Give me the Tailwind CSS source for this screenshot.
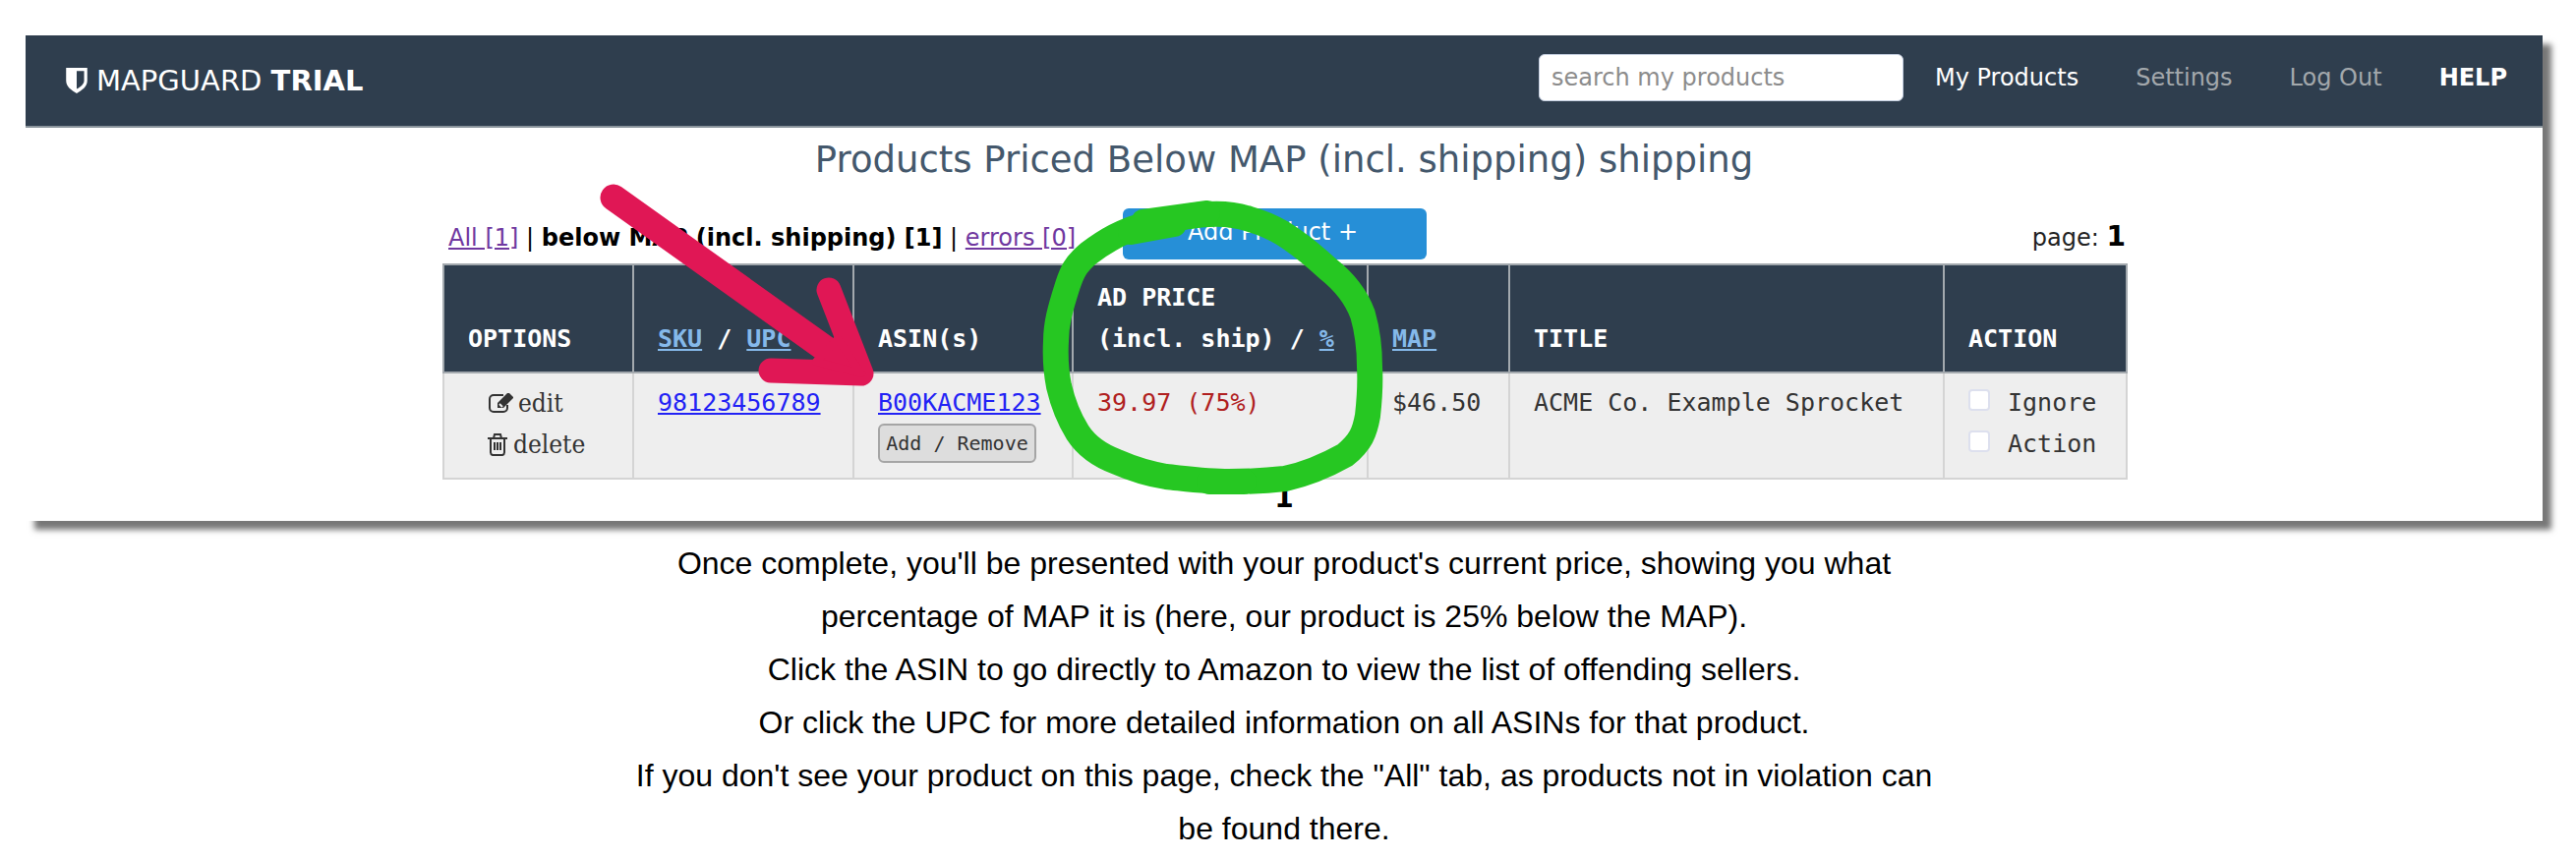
<!DOCTYPE html>
<html lang="en">
<head>
    <meta charset="UTF-8">
    <meta name="viewport" content="width=device-width, initial-scale=1.0">
    <title>MapGuard Trial</title>
    <script src="https://cdn.jsdelivr.net/npm/@tailwindcss/browser@4"></script>
</head>
<body class="bg-white text-black">
    <div class="pl-[26px] pt-9 pr-[34px]">
        <div class="relative bg-white shadow-[9px_9px_6px_#777] font-['DejaVu_Sans',sans-serif] text-2xl pb-1">
            <header class="flex items-center justify-between h-[94px] pl-10 pr-9 bg-[#2f3e4e] border-b-2 border-[#8a949c]">
                <a href="#" class="flex items-center gap-2 text-[29px] text-white">
                    <svg class="w-6 h-7" viewBox="0 0 22 26" fill="white"><path fill-rule="evenodd" d="M1 1h20v12c0 6-5 9-10 12C6 22 1 19 1 13zM11 4v17c4-2 7-5 7-8V4z"/></svg>
                    <span>MAPGUARD <b>TRIAL</b></span>
                </a>
                <nav class="flex items-center gap-[58px] pb-[6px]">
                    <div class="flex items-center gap-8">
                        <input type="text" aria-label="search my products" placeholder="search my products" class="w-[371px] h-12 px-3 rounded-md bg-white border border-[#c5cfe0] placeholder:text-[#8c8c8c]">
                        <a href="#" class="text-white">My Products</a>
                    </div>
                    <a href="#" class="text-[#a3a8ac]">Settings</a>
                    <a href="#" class="text-[#a3a8ac]">Log Out</a>
                    <a href="#" class="font-bold text-white">HELP</a>
                </nav>
            </header>

            <h1 class="text-center text-[37px] leading-[66px] text-[#44586c]">Products Priced Below MAP (incl. shipping) shipping</h1>

            <main class="w-[1712px] mx-auto">
                <div class="flex items-end h-[72px] pb-1 pl-[6px]">
                    <p class="whitespace-nowrap leading-10 pb-[2px]">
                        <a href="#" class="underline text-[#7038a0]">All [1]</a> | <b>below MAP (incl. shipping) [1]</b> | <a href="#" class="underline text-[#7038a0]">errors [0]</a>
                    </p>
                    <button type="button" class="w-[309px] h-[52px] ml-12 pr-1 pb-1 rounded-md bg-[#268fd7] text-white">Add Product +</button>
                    <p class="ml-auto leading-10 pb-[2px] text-[#222]">page: <b class="text-[28px] text-black">1</b></p>
                </div>

                <table class="w-full table-fixed border-collapse text-left font-['DejaVu_Sans_Mono',monospace] text-[25px] leading-[42px] text-[#333]">
                    <colgroup>
                        <col class="w-[193px]"><col class="w-[224px]"><col class="w-[223px]"><col class="w-[300px]"><col class="w-[144px]"><col class="w-[442px]"><col class="w-[186px]">
                    </colgroup>
                    <thead class="bg-[#2f3e4e] text-white align-bottom">
                        <tr class="*:border-2 *:border-[#a3a9ae] *:px-6 *:py-3">
                            <th>OPTIONS</th>
                            <th><a href="#" class="underline text-[#85b9ea]">SKU</a> / <a href="#" class="underline text-[#85b9ea]">UPC</a></th>
                            <th>ASIN(s)</th>
                            <th class="whitespace-nowrap">AD PRICE<br>(incl. ship) / <a href="#" class="underline text-[#85b9ea]">%</a></th>
                            <th><a href="#" class="underline text-[#85b9ea]">MAP</a></th>
                            <th>TITLE</th>
                            <th>ACTION</th>
                        </tr>
                    </thead>
                    <tbody class="bg-[#eee] align-top">
                        <tr class="*:border-2 *:border-[#d4d4d4] *:px-6 *:pt-[9px] *:pb-[13px]">
                            <td class="text-[26px] font-['DejaVu_Serif_Condensed','DejaVu_Serif',serif]">
                                <a href="#" class="flex items-center gap-1 pl-5">
                                    <svg class="w-[27px] h-[22px]" viewBox="0 0 27 22" fill="none" stroke="#333" stroke-width="2"><path d="M16 3H6a4 4 0 0 0-4 4v9a4 4 0 0 0 4 4h10a4 4 0 0 0 4-4v-3"/><path d="M10 16v-5L20 1h2l4 4v1L16 16z" fill="#333" stroke="none"/><path d="M12 12l3 3" stroke="#eee"/></svg>
                                    edit
                                </a>
                                <a href="#" class="flex items-center gap-[6px] pl-5">
                                    <svg class="w-5 h-6" viewBox="0 0 20 24" fill="none" stroke="#333" stroke-width="2"><path d="M0 6h20M6 6l1-4h6l1 4M3 6v14a3 3 0 0 0 2 3h10a3 3 0 0 0 2-3V6M7 10v8M10 10v8M13 10v8"/></svg>
                                    delete
                                </a>
                            </td>
                            <td><a href="#" class="underline text-[#2222f5]">98123456789</a></td>
                            <td>
                                <a href="#" class="underline text-[#2222f5]">B00KACME123</a>
                                <button type="button" class="block w-[161px] h-10 rounded-md border-2 border-[#a5a5a5] bg-[#ddd] text-xl leading-8">Add / Remove</button>
                            </td>
                            <td class="text-[#b02020]">39.97 (75%)</td>
                            <td>$46.50</td>
                            <td>ACME Co. Example Sprocket</td>
                            <td>
                                <label class="flex items-center gap-[18px]"><input type="checkbox" class="appearance-none w-[22px] h-[22px] mb-[6px] rounded-sm border-2 border-[#dde0ee] bg-white">Ignore</label>
                                <label class="flex items-center gap-[18px]"><input type="checkbox" class="appearance-none w-[22px] h-[22px] mb-[6px] rounded-sm border-2 border-[#dde0ee] bg-white">Action</label>
                            </td>
                        </tr>
                    </tbody>
                </table>
                <p class="text-center text-[28px] leading-[38px] font-bold">1</p>
            </main>

            <!-- hand-drawn arrow and circle -->
            <svg class="absolute top-0 left-1/2 -ml-[1280px] w-[2560px] h-[494px] pointer-events-none" viewBox="26 36 2560 494" fill="none" stroke-linecap="round" stroke-linejoin="round">
                <g stroke="#e01755">
                    <path d="M624 201L872 378" stroke-width="27"/>
                    <path d="M843 295L876 380L784 377" stroke-width="25"/>
                    <path d="M852 345L876 380L830 368Z" fill="#e01755" stroke-width="8"/>
                </g>
                <g stroke="#26c722">
                    <path stroke-width="26" d="M1229 218C1205 219 1185 225 1161 230C1141 235 1120 248 1107 258C1093 270 1090 278 1086 290C1078 315 1074 330 1074 347C1073 365 1074 378 1077 393C1081 410 1086 424 1096 440C1105 454 1120 464 1136 470C1152 477 1168 482 1186 485C1206 487 1228 490 1250 490C1268 490 1290 489 1307 487C1330 482 1352 472 1368 463C1384 450 1388 440 1391 423C1393 405 1394 390 1393 373C1393 350 1390 334 1386 320C1378 298 1364 284 1350 273C1336 260 1320 247 1304 237C1292 230 1282 226 1271 223C1256 218 1244 217 1229 218Z"/>
                    <path stroke-width="26" d="M1163 226L1228 217M1150 236L1194 228M1230 490H1265"/>
                </g>
            </svg>
        </div>

        <div class="max-w-[1344px] mx-auto pt-4 text-center text-[32px] leading-[54px] font-['Liberation_Sans',Arial,sans-serif]">
            <p>Once complete, you'll be presented with your product's current price, showing you what percentage of MAP it is (here, our product is 25% below the MAP).</p>
            <p>Click the ASIN to go directly to Amazon to view the list of offending sellers.</p>
            <p>Or click the UPC for more detailed information on all ASINs for that product.</p>
            <p>If you don't see your product on this page, check the "All" tab, as products not in violation can be found there.</p>
        </div>
    </div>
</body>
</html>
